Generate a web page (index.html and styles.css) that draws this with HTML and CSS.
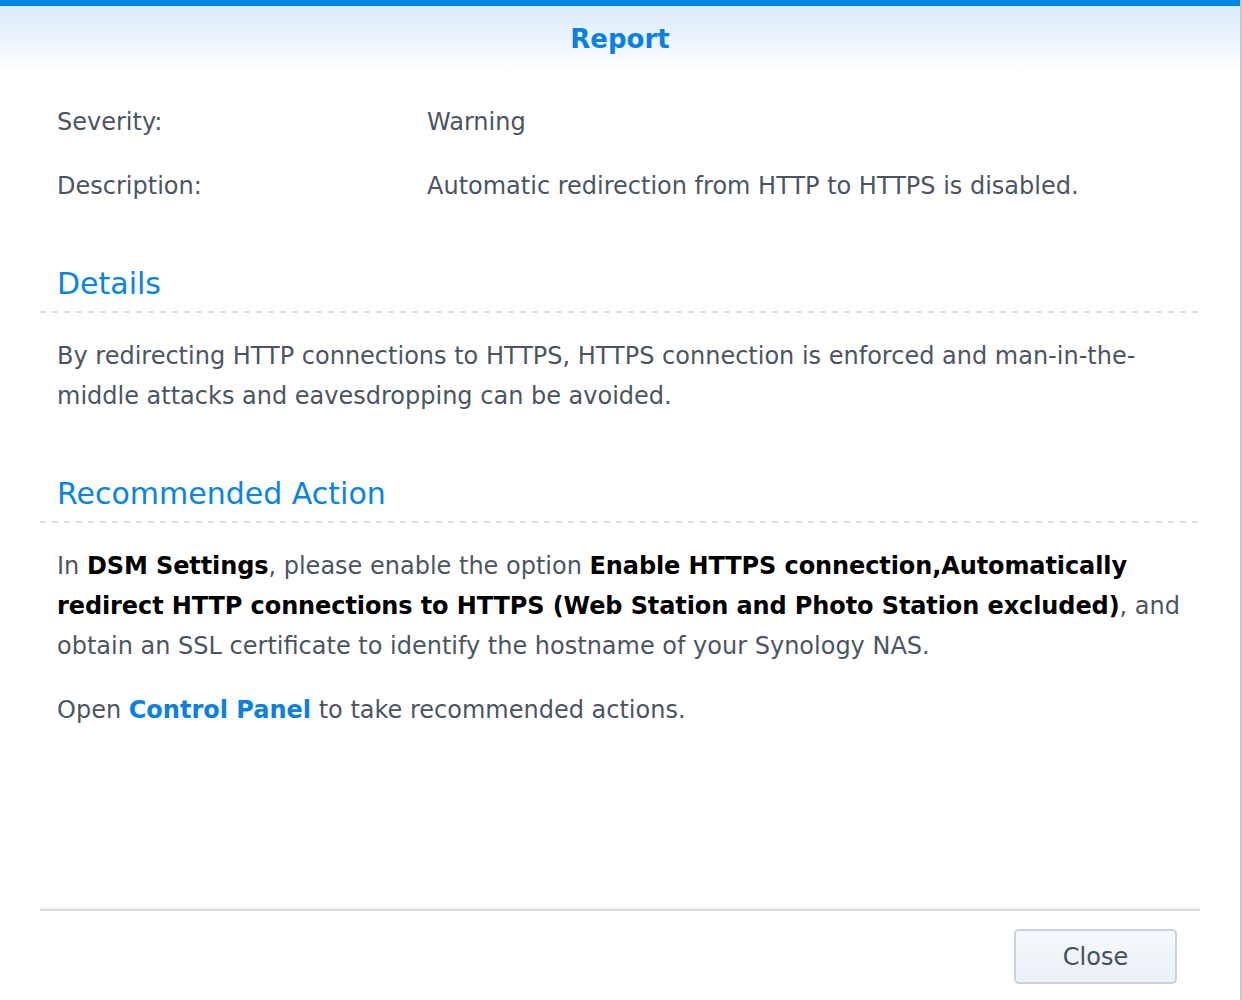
FILE: index.html
```html
<!DOCTYPE html>
<html lang="en">
<head>
<meta charset="utf-8">
<title>Report</title>
<link rel="stylesheet" href="styles.css">
</head>
<body>
<div class="screen">
  <div class="dialog">
    <header class="dialog-header">
      <h1 class="dialog-title">Report</h1>
    </header>
    <main class="dialog-body">
      <div class="info-row">
        <div class="info-label">Severity:</div>
        <div class="info-value">Warning</div>
      </div>
      <div class="info-row">
        <div class="info-label">Description:</div>
        <div class="info-value">Automatic redirection from HTTP to HTTPS is disabled.</div>
      </div>

      <section class="section section-details">
        <h2 class="section-title">Details</h2>
        <div class="dash-line"></div>
        <p class="para">By redirecting HTTP connections to HTTPS, HTTPS connection is enforced and man-in-the-middle attacks and eavesdropping can be avoided.</p>
      </section>

      <section class="section section-action">
        <h2 class="section-title">Recommended Action</h2>
        <div class="dash-line"></div>
        <p class="para">In <b class="strong">DSM Settings</b>, please enable the option <b class="strong">Enable HTTPS connection,Automatically redirect HTTP connections to HTTPS (Web Station and Photo Station excluded)</b>, and obtain an SSL certificate to identify the hostname of your Synology NAS.</p>
        <p class="para para-open">Open <a class="link" href="#">Control Panel</a> to take recommended actions.</p>
      </section>
    </main>
    <footer class="dialog-footer">
      <button class="btn-close" type="button">Close</button>
    </footer>
  </div>
  <div class="edge"></div>
</div>
</body>
</html>
```
FILE: styles.css
```css
html, body {
  margin: 0;
  padding: 0;
  background: #ffffff;
}

body {
  font-family: "DejaVu Sans", Verdana, sans-serif;
  color: #4b5561;
}

.screen {
  display: flex;
  width: 1242px;
  height: 1000px;
  overflow: hidden;
}

.dialog {
  width: 1240px;
  height: 1000px;
  display: flex;
  flex-direction: column;
  background: #ffffff;
}

.edge {
  width: 2px;
  height: 1000px;
  background: #c8c8c8;
}

.dialog-header {
  height: 64px;
  border-top: 6px solid #0086e6;
  background: linear-gradient(to bottom, #dbebfa 0%, #eaf3fc 50%, #ffffff 100%);
  display: flex;
  align-items: center;
  justify-content: center;
}

.dialog-title {
  margin: 0;
  font-size: 26px;
  font-weight: bold;
  color: #0a80e2;
  line-height: 1;
  padding-top: 1px;
}

.dialog-body {
  flex: 1;
  margin: 0 40px;
  padding: 32px 4px 0 17px;
  font-size: 24px;
  line-height: 40px;
}

.info-row {
  display: flex;
  margin-bottom: 24px;
}

.info-label {
  width: 370px;
  flex: none;
}

.info-value {
  flex: 1;
}

.section-details {
  margin-top: 58px;
}

.section-title {
  margin: 0;
  font-size: 30px;
  font-weight: normal;
  line-height: 40px;
  color: #0a84e2;
  padding-bottom: 7px;
}

.dash-line {
  height: 2px;
  margin: 0 -4px 0 -17px;
  background: repeating-linear-gradient(to right, #d5dfea 0 6px, transparent 6px 12px);
}

.para {
  margin: 23px 0 0;
}

.section-action {
  margin-top: 58px;
}

.para-open {
  margin-top: 24px;
}

.strong {
  color: #000000;
  font-weight: bold;
  letter-spacing: -0.1px;
}

.link {
  color: #0a80e2;
  font-weight: bold;
  text-decoration: none;
}

.dialog-footer {
  height: 89px;
  margin: 0 40px;
  border-top: 2px solid #dcdcdc;
  position: relative;
  display: flex;
  justify-content: flex-end;
  align-items: flex-start;
}

.dialog-footer::before {
  content: "";
  position: absolute;
  left: 0;
  right: 0;
  top: -6px;
  height: 4px;
  background: linear-gradient(to bottom, #ffffff, #f0f0f0);
}

.btn-close {
  margin-top: 18px;
  margin-right: 23px;
  width: 163px;
  height: 55px;
  border: 2px solid #c8d3df;
  border-radius: 5px;
  background: linear-gradient(to bottom, #f5f9fd, #eaf0f6);
  font-family: "DejaVu Sans", Verdana, sans-serif;
  font-size: 24px;
  color: #46505b;
  padding: 0;
}
```
